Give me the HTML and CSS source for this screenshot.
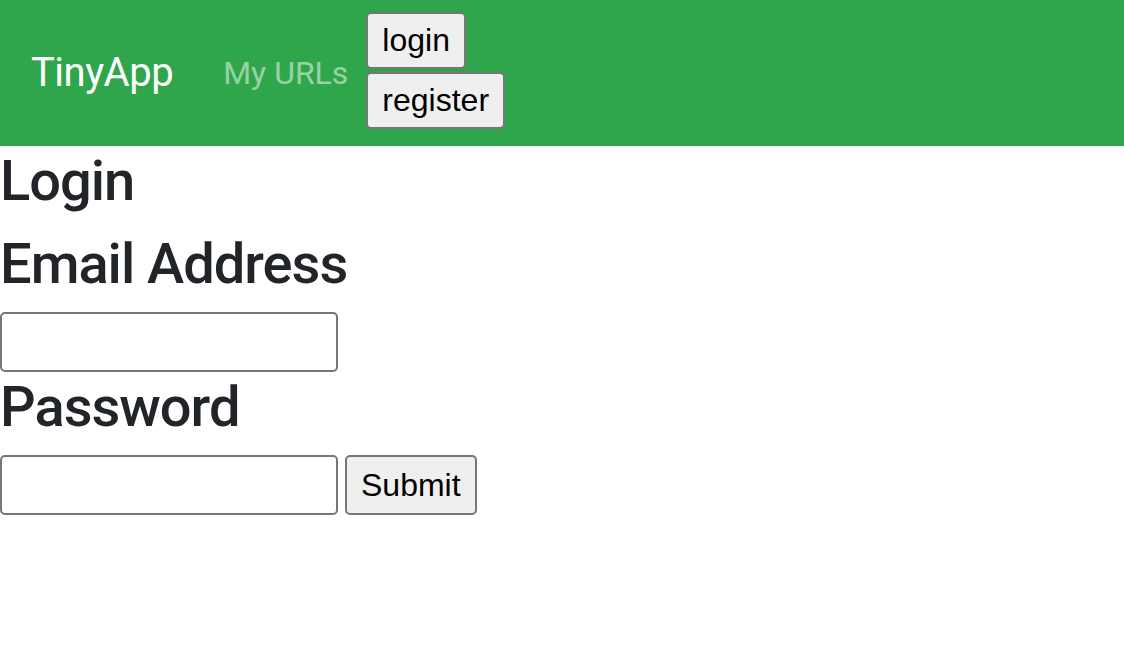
FILE: index.html
```html
<!DOCTYPE html>
<html lang="en">
<head>
<meta charset="utf-8">
<title>TinyApp</title>
<link rel="stylesheet" href="styles.css">
</head>
<body>
<nav class="navbar">
  <a class="brand" href="#">TinyApp</a>
  <a class="nav-link" href="#">My URLs</a>
  <div class="nav-buttons">
    <button class="btn" type="button">login</button>
    <button class="btn" type="button">register</button>
  </div>
</nav>
<main class="content">
  <h3 class="heading">Login</h3>
  <form class="login-form">
    <h3 class="heading">Email Address</h3>
    <div class="field-row">
      <input class="field" type="text" name="email">
    </div>
    <h3 class="heading">Password</h3>
    <div class="field-row">
      <input class="field" type="password" name="password">
      <button class="btn btn-submit" type="submit">Submit</button>
    </div>
  </form>
</main>
</body>
</html>
```
FILE: styles.css
```css
html, body {
  margin: 0;
  padding: 0;
  background: #ffffff;
}

body {
  font-family: Roboto, "Noto Sans", "Liberation Sans", sans-serif;
  color: #212529;
}

.navbar {
  display: flex;
  align-items: center;
  height: 146px;
  box-sizing: border-box;
  padding: 12px 32px 17px 31px;
  background: #2fa64b;
}

.brand {
  font-size: 40px;
  line-height: 60px;
  letter-spacing: -0.5px;
  color: #ffffff;
  text-decoration: none;
  margin-right: 33px;
  margin-top: 4px;
}

.nav-link {
  font-size: 32px;
  line-height: 48px;
  color: rgba(255, 255, 255, 0.5);
  text-decoration: none;
  padding: 0 18px 0 17px;
  margin-top: 4px;
}

.nav-buttons {
  display: flex;
  flex-direction: column;
  align-items: flex-start;
  gap: 3px;
}

.btn {
  font-family: "Liberation Sans", Arial, sans-serif;
  font-size: 32px;
  line-height: 53px;
  height: 57px;
  padding: 0 14px;
  margin: 0;
  color: #000000;
  background: #efefef;
  border: 2px solid #767676;
  border-radius: 5px;
  box-sizing: border-box;
}

.btn-submit {
  height: 60px;
  line-height: 56px;
}

.content {
  padding: 0;
}

.heading {
  font-size: 56px;
  font-weight: 500;
  line-height: 67px;
  letter-spacing: -1px;
  padding-top: 2px;
  margin: 0 0 14px 0;
  color: #212529;
}

.login-form {
  margin: 0;
}

.field-row {
  display: flex;
  align-items: flex-start;
  gap: 7px;
  margin: 1px 0 0 0;
}

.field {
  width: 338px;
  height: 60px;
  box-sizing: border-box;
  border: 2px solid #767676;
  border-radius: 5px;
  background: #ffffff;
  margin: 0;
  padding: 2px 4px;
  font-size: 32px;
}
```
